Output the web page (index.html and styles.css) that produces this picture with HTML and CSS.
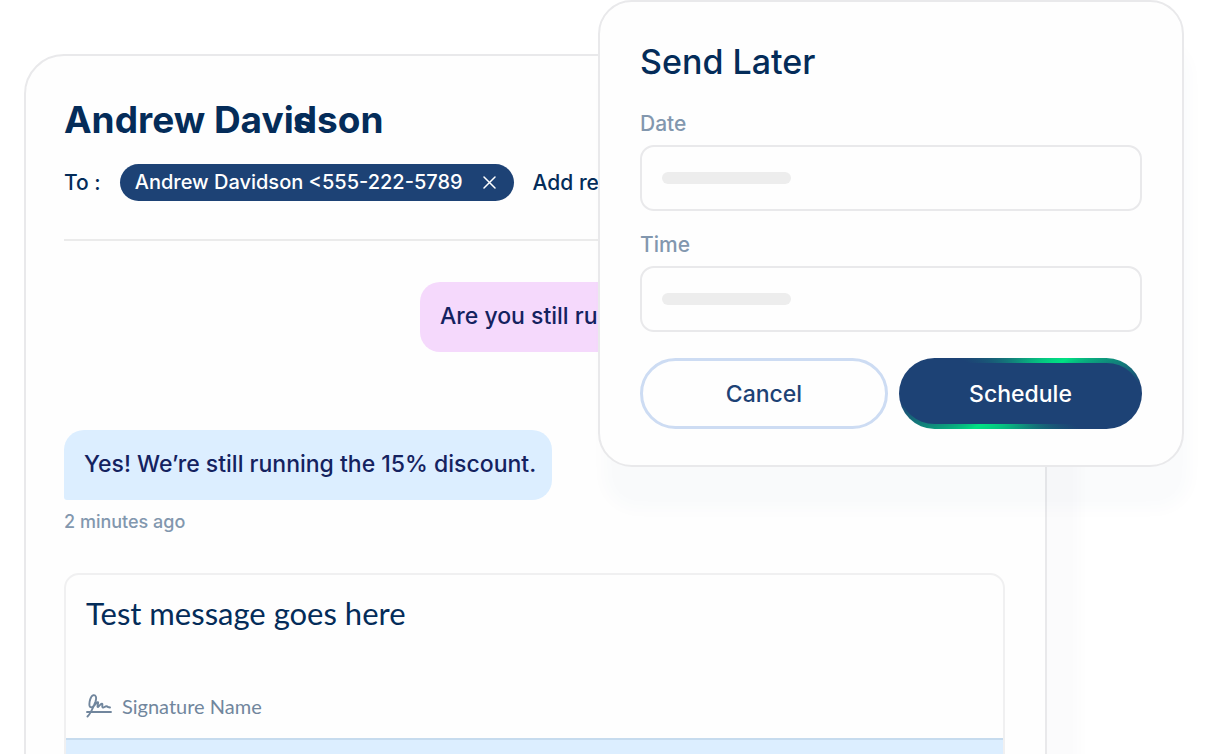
FILE: index.html
```html
<!DOCTYPE html>
<html lang="en">
<head>
    <meta charset="UTF-8">
    <meta name="viewport" content="width=device-width, initial-scale=1.0">
    <title>Messages</title>
    <link rel="stylesheet" href="styles.css">
</head>
<body>
    <div class="stage">
        <main class="chat">
            <h1 class="chat-name">Andrew Davi<span class="doubled">d</span>son</h1>
            <div class="recipients">
                <span>To :</span>
                <span class="chip">
                    Andrew Davidson &lt;555-222-5789
                    <button class="chip-remove" type="button" aria-label="Remove">
                        <svg width="13" height="13" viewBox="0 0 13 13" fill="none" stroke="currentColor" stroke-width="1.5" stroke-linecap="round"><path d="M1 1l11 11M12 1L1 12"/></svg>
                    </button>
                </span>
                <a class="add-link" href="#">Add recipient</a>
            </div>

            <div class="bubble sent">Are you still running the 15% discount?</div>
            <div class="bubble received">Yes! We’re still running the 15% discount.</div>
            <p class="time">2 minutes ago</p>

            <form class="composer">
                <textarea class="message" aria-label="Message">Test message goes here</textarea>
                <div class="signature">
                    <svg width="26" height="24" viewBox="0 0 26 24" fill="none" stroke="currentColor" stroke-width="1.9" stroke-linecap="round" stroke-linejoin="round">
                        <path d="M1 18h24"/>
                        <path d="M1.500 22.500C4 20 7.500 13 9.500 7.500C11 3 9.500 .8 7.500 1.200C4.500 2 3 8 3.500 11.500C4 14.500 7 14 10.500 9C11.500 7.500 12.500 8 12 9.500L11.500 12.500C11.500 13.500 12.500 13 14 11C15.500 9 16.800 9.500 16.300 11.500C16 13.500 17 14 18.500 13C20 12 21 12 22 13L24 13.500"/>
                    </svg>
                    <span>Signature Name</span>
                </div>
                <div class="toolbar"></div>
            </form>
        </main>

        <form class="dialog" role="dialog" aria-labelledby="dialogTitle">
            <h2 class="dialog-title" id="dialogTitle">Send Later</h2>
            <label class="label" for="date">Date</label>
            <div class="field">
                <span class="skeleton"></span>
                <input id="date" type="text">
            </div>
            <label class="label" for="time">Time</label>
            <div class="field">
                <span class="skeleton"></span>
                <input id="time" type="text">
            </div>
            <div class="actions">
                <button class="btn cancel" type="button">Cancel</button>
                <button class="btn schedule" type="button">Schedule</button>
            </div>
        </form>
    </div>
</body>
</html>
```
FILE: styles.css
```css
* {
    box-sizing: border-box;
}
body {
    margin: 0;
    background: #fff;
    color: #042c59;
    font-family: "Inter", sans-serif;
    font-size: 20px;
    font-weight: 500;
}
button, input, textarea {
    font: inherit;
    color: inherit;
}
.stage {
    position: relative;
    height: 100vh;
    overflow: hidden;
}

/* conversation */
.chat {
    margin: 54px 164px 0 24px;
    padding: 42px 40px 0 38px;
    border: 2px solid #e9e9eb;
    border-radius: 40px 40px 0 0;
    background: #fefefe;
    box-shadow: 32px 24px 14px rgba(30, 66, 117, 0.02);
}
.chat-name {
    margin: 0 0 22px;
    font-size: 37px;
    line-height: 44px;
    font-weight: 700;
}
/* the s is printed over the d */
.doubled {
    position: relative;
}
.doubled::before {
    content: "s";
    position: absolute;
    left: -1px;
    line-height: 44px;
}
.recipients {
    display: flex;
    align-items: center;
    gap: 19px;
    padding-bottom: 38px;
    border-bottom: 2px solid #ebebeb;
    font-size: 21px;
    line-height: 37px;
    white-space: nowrap;
}
.chip {
    display: flex;
    align-items: center;
    gap: 20px;
    padding: 0 18px 0 15px;
    border-radius: 19px;
    background: #1d4275;
    color: #fff;
    font-size: 20px;
}
.chip-remove {
    display: flex;
    padding: 0;
    border: none;
    background: none;
    cursor: pointer;
}
.add-link {
    color: inherit;
    text-decoration: none;
}
.bubble {
    width: fit-content;
    padding: 0 16px 2px 20px;
    border-radius: 20px;
    color: #14225f;
    font-size: 23px;
    line-height: 68px;
    white-space: nowrap;
}
.sent {
    width: 585px;
    margin: 41px 0 78px auto;
    background: #f5d9fc;
}
.received {
    border-bottom-left-radius: 3px;
    background: #dceeff;
}
.time {
    margin: 10px 0 39px;
    color: #8297ae;
    font-size: 18px;
    line-height: 24px;
}
.composer {
    border: 2px solid #f0f0f1;
    border-radius: 15px 15px 0 0;
    font-family: "Lato", sans-serif;
    font-weight: 400;
}
.message {
    display: block;
    width: 100%;
    height: 100px;
    padding: 0 20px;
    margin: 18px 0 0;
    border: none;
    outline: none;
    resize: none;
    background: none;
    font-size: 31px;
    line-height: 40px;
}
.signature {
    display: flex;
    align-items: center;
    gap: 10px;
    padding: 1px 20px 20px;
    color: #71869d;
    font-size: 20px;
    line-height: 24px;
}
.toolbar {
    height: 60px;
    border-top: 2px solid #c6dbee;
    background: #dceeff;
}

/* send later dialog */
.dialog {
    position: absolute;
    top: 0;
    left: 598px;
    right: 27px;
    padding: 40px 40px 36px;
    border: 2px solid #e9e9eb;
    border-radius: 34px;
    background: #fefefe;
    box-shadow: 6px 42px 16px rgba(30, 66, 117, 0.022);
}
.dialog-title {
    margin: 0 0 28px;
    font-size: 34px;
    line-height: 40px;
    font-weight: 500;
}
.label {
    display: block;
    color: #8297ae;
    font-size: 21px;
    line-height: 28px;
}
.field {
    display: flex;
    align-items: center;
    gap: 12px;
    height: 66px;
    margin: 7px 0 20px;
    padding: 0 20px;
    border: 2px solid #e9e9eb;
    border-radius: 14px;
}
.skeleton {
    width: 129px;
    height: 12px;
    border-radius: 6px;
    background: #ededed;
}
.field input {
    flex: 1;
    min-width: 0;
    border: none;
    outline: none;
    background: none;
}
.actions {
    display: grid;
    grid-template-columns: 248fr 243fr;
    gap: 11px;
    margin-top: 26px;
}
.btn {
    height: 71px;
    padding: 0;
    border-radius: 36px;
    font-size: 23px;
    cursor: pointer;
}
.cancel {
    border: 3px solid #cddcf3;
    background: #fefefe;
    color: #1d4275;
}
.schedule {
    border: solid transparent;
    border-width: 5px 2px;
    background:
        linear-gradient(#1d4275, #1d4275) padding-box,
        conic-gradient(from 300deg, #1d4275, #00e183 113deg, #1d4275 145deg, #1d4275 180deg, #00e183 293deg, #1d4275 325deg) border-box;
    color: #fff;
}
```
